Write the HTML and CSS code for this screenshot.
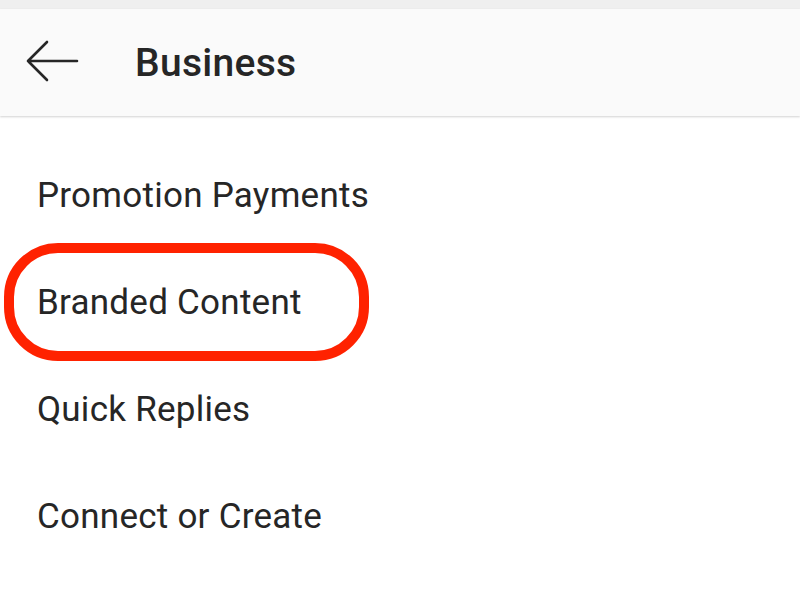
FILE: index.html
```html
<!DOCTYPE html>
<html>
<head>
<meta charset="utf-8">
<link rel="stylesheet" href="styles.css">
</head>
<body>
<div class="status"></div>
<header class="bar">
  <svg class="back" width="54" height="44" viewBox="0 0 54 44">
    <path d="M2 21 H51 M21 2 L2 21 L21 40" fill="none" stroke="#262626" stroke-width="2.6" stroke-linecap="round" stroke-linejoin="round"/>
  </svg>
  <h1 class="title">Business</h1>
</header>
<ul class="list">
  <li class="item">Promotion Payments</li>
  <li class="item highlighted">Branded Content<span class="ring"></span></li>
  <li class="item">Quick Replies</li>
  <li class="item">Connect or Create</li>
</ul>
</body>
</html>
```
FILE: styles.css
```css
html, body {
  margin: 0;
  padding: 0;
  background: #ffffff;
  font-family: Roboto, "Noto Sans", sans-serif;
  color: #262626;
  overflow: hidden;
}
.status {
  height: 9px;
  background: #efefef;
}
.bar {
  height: 107px;
  background: #fafafa;
  display: flex;
  align-items: center;
  box-shadow: 0 1px 2px rgba(0,0,0,0.18);
  position: relative;
  z-index: 1;
}
.back {
  margin-left: 26px;
  margin-top: -2px;
  flex: none;
}
.title {
  margin: 0 0 0 55px;
  font-size: 39px;
  font-weight: 500;
  letter-spacing: 0.3px;
  color: #262626;
}
.list {
  list-style: none;
  margin: 0;
  padding: 26px 0 0 0;
}
.item {
  height: 107px;
  display: flex;
  align-items: center;
  padding-left: 37px;
  font-size: 35px;
  letter-spacing: 0.25px;
  position: relative;
}
.ring {
  position: absolute;
  left: 4px;
  top: -6px;
  width: 345px;
  height: 98px;
  border: 10px solid #ff2200;
  border-radius: 54px;
}
```
